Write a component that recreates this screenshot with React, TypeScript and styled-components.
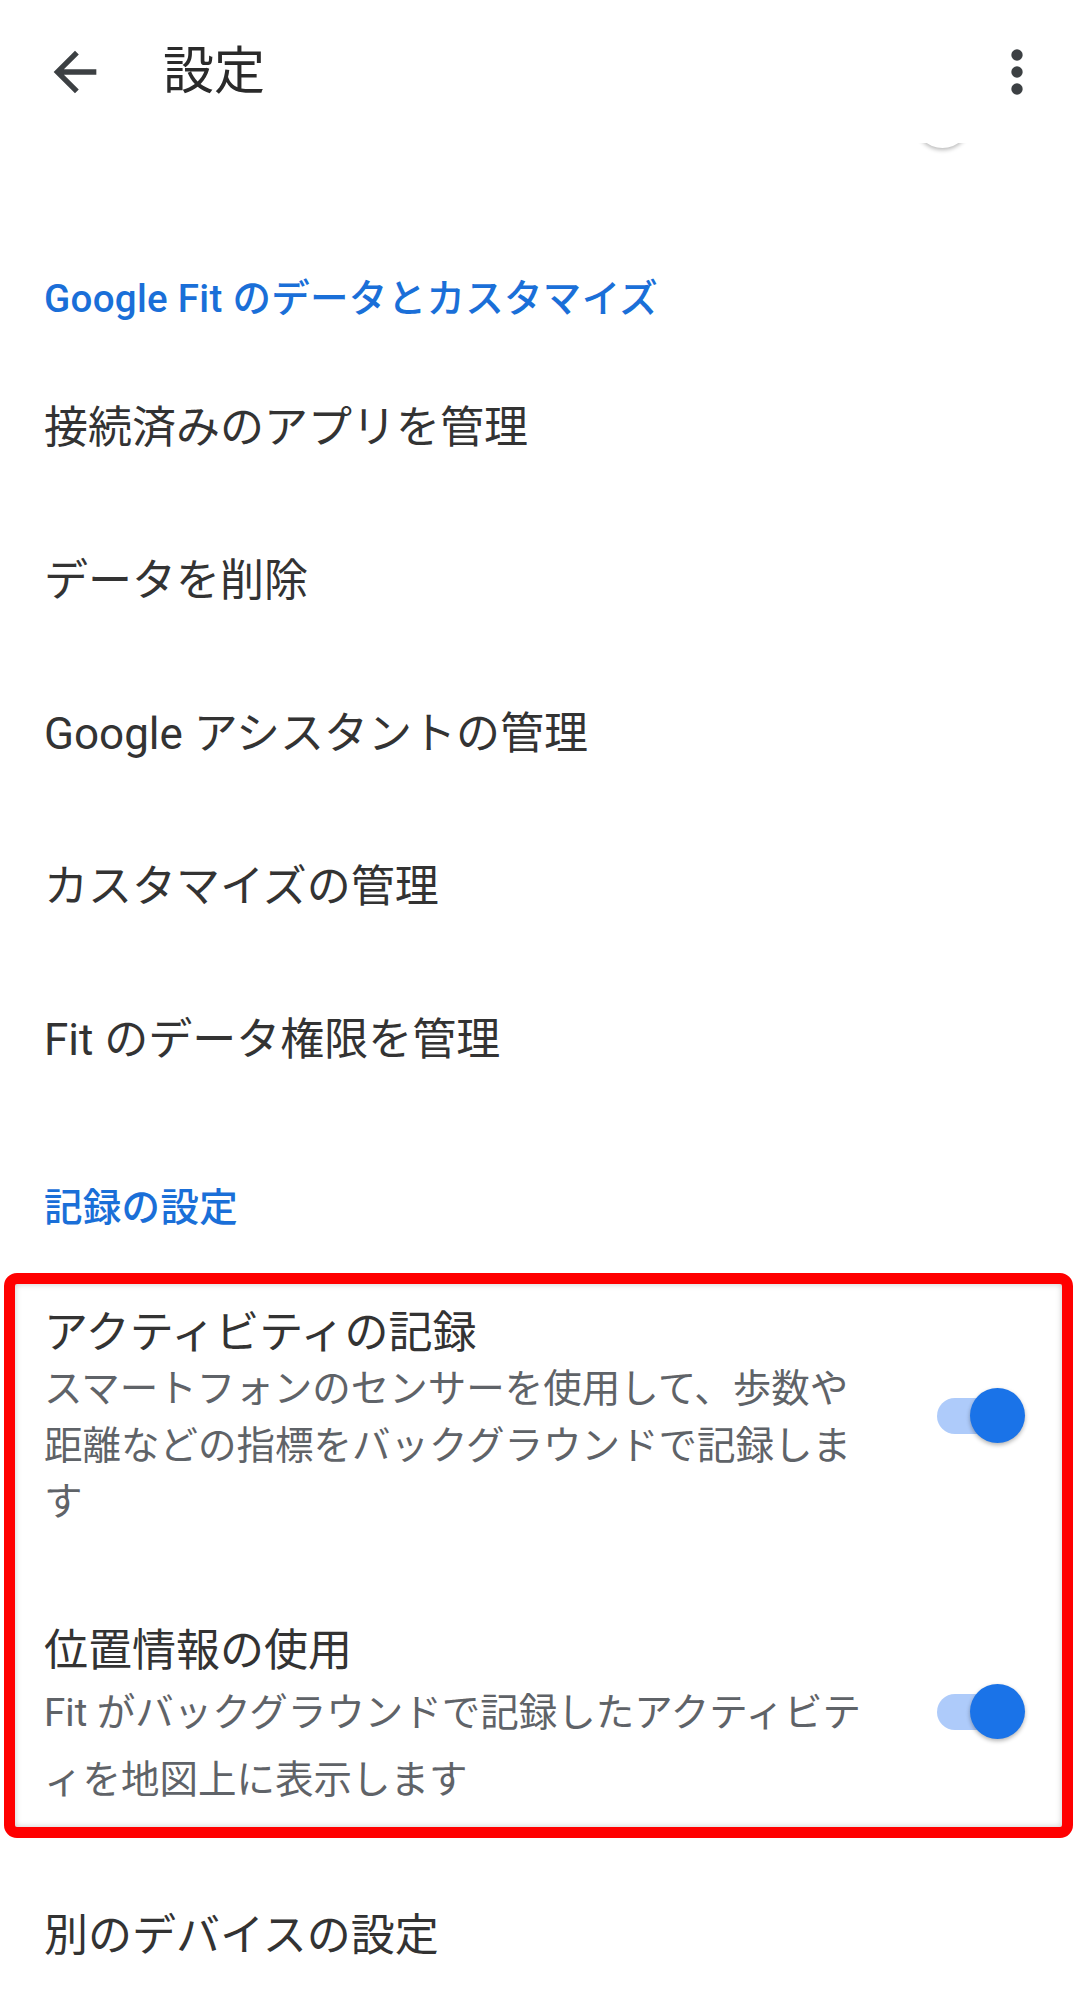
import styled, { createGlobalStyle } from "styled-components";

const GlobalStyle = createGlobalStyle`
    html, body {
        margin: 0;
        padding: 0;
        background: #fff;
    }
    body {
        font-family: Roboto, "Noto Sans CJK JP", "Noto Sans", sans-serif;
        color: #333;
    }
`

const Page = styled.div`
    width: 1076px;
    min-height: 2011px;
    background: #fff;
    overflow: hidden;
`

const AppBar = styled.header`
    height: 143px;
    display: flex;
    align-items: center;
    background: #fff;
`

const IconButton = styled.div<{ $left?: number; $right?: number }>`
    display: flex;
    align-items: center;
    justify-content: center;
    margin-left: ${(p) => (p.$left !== undefined ? `${p.$left}px` : "auto")};
    margin-right: ${(p) => p.$right ?? 0}px;
    color: #3c4043;
`

const Title = styled.h1`
    margin: 0 0 0 56px;
    font-size: 51px;
    font-weight: 400;
    color: #2a2a2a;
    line-height: 1;
`

const Remnant = styled.div`
    height: 14px;
    overflow: hidden;
`

const GhostThumb = styled.div`
    width: 55px;
    height: 55px;
    border-radius: 50%;
    background: #fff;
    margin: -50px 0 0 915px;
    box-shadow: 0 2px 4px rgba(0, 0, 0, 0.28);
`

const SectionHeading = styled.div<{ $top: number }>`
    margin-top: ${(p) => p.$top}px;
    padding-left: 44px;
    height: 60px;
    line-height: 60px;
    font-size: 38.5px;
    font-weight: 500;
    letter-spacing: 0.3px;
    color: #1a6fd8;
    white-space: nowrap;
`

const ItemList = styled.div<{ $top: number }>`
    margin-top: ${(p) => p.$top}px;
`

const Item = styled.div`
    height: 153px;
    line-height: 153px;
    padding-left: 44px;
    font-size: 44px;
    color: #333;
    white-space: nowrap;
`

const Highlight = styled.div`
    margin: 35px 0 0 4px;
    width: 1069px;
    box-sizing: border-box;
    border: 11px solid #ff0000;
    border-radius: 13px;
    padding: 21px 0 14px 29px;
    box-shadow: inset 0 0 6px rgba(0, 0, 0, 0.22);
`

const SwitchRow = styled.div<{ $gap?: number }>`
    display: flex;
    align-items: flex-start;
    margin-top: ${(p) => p.$gap ?? 0}px;
`

const RowText = styled.div`
    flex: 1;
`

const RowTitle = styled.div`
    font-size: 44px;
    line-height: 56px;
    color: #333;
    white-space: nowrap;
`

const Summary = styled.div<{ $lh: number }>`
    font-size: 38.5px;
    line-height: ${(p) => p.$lh}px;
    color: #5f6368;
    white-space: nowrap;
`

const Line = styled.span`
    display: block;
`

const Switch = styled.div<{ $top: number }>`
    position: relative;
    width: 88px;
    height: 55px;
    margin: ${(p) => p.$top}px 37px 0 0;
    flex-shrink: 0;
`

const Track = styled.div`
    position: absolute;
    left: 0;
    top: 10px;
    width: 79px;
    height: 36px;
    border-radius: 18px;
    background: #aecbfa;
`

const Thumb = styled.div`
    position: absolute;
    right: 0;
    top: 0;
    width: 55px;
    height: 55px;
    border-radius: 50%;
    background: #1a73e8;
    box-shadow: 0 2px 4px rgba(0, 0, 0, 0.3);
`

const LastItem = styled.div`
    margin-top: 70px;
    padding-left: 44px;
    font-size: 44px;
    line-height: 56px;
    color: #333;
    white-space: nowrap;
`

function ToggleOn({ top }: { top: number }) {
    return (
        <Switch $top={top}>
            <Track />
            <Thumb />
        </Switch>
    )
}

const fitItems = [
    "接続済みのアプリを管理",
    "データを削除",
    "Google アシスタントの管理",
    "カスタマイズの管理",
    "Fit のデータ権限を管理",
]

export default function App() {
    return (
        <Page>
            <GlobalStyle />
            <AppBar>
                <IconButton $left={43}>
                    <svg width="64" height="64" viewBox="0 0 24 24" fill="currentColor">
                        <path d="M20 11H7.83l5.59-5.59L12 4l-8 8 8 8 1.41-1.41L7.83 13H20v-2z" />
                    </svg>
                </IconButton>
                <Title>設定</Title>
                <IconButton $right={25}>
                    <svg width="68" height="68" viewBox="0 0 24 24" fill="#3c4043">
                        <circle cx="12" cy="6" r="2" />
                        <circle cx="12" cy="12" r="2" />
                        <circle cx="12" cy="18" r="2" />
                    </svg>
                </IconButton>
            </AppBar>
            <Remnant>
                <GhostThumb />
            </Remnant>

            <SectionHeading $top={112}>Google Fit のデータとカスタマイズ</SectionHeading>
            <ItemList $top={23}>
                {fitItems.map((label) => (
                    <Item key={label}>{label}</Item>
                ))}
            </ItemList>

            <SectionHeading $top={61}>記録の設定</SectionHeading>

            <Highlight>
                <SwitchRow>
                    <RowText>
                        <RowTitle>アクティビティの記録</RowTitle>
                        <Summary $lh={56.5}>
                            <Line>スマートフォンのセンサーを使用して、歩数や</Line>
                            <Line>距離などの指標をバックグラウンドで記録しま</Line>
                            <Line>す</Line>
                        </Summary>
                    </RowText>
                    <ToggleOn top={83} />
                </SwitchRow>
                <SwitchRow $gap={92}>
                    <RowText>
                        <RowTitle>位置情報の使用</RowTitle>
                        <Summary $lh={67}>
                            <Line>Fit がバックグラウンドで記録したアクティビテ</Line>
                            <Line>ィを地図上に表示します</Line>
                        </Summary>
                    </RowText>
                    <ToggleOn top={61} />
                </SwitchRow>
            </Highlight>

            <LastItem>別のデバイスの設定</LastItem>
        </Page>
    )
}
